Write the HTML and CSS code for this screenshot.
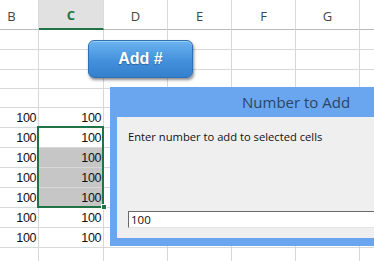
FILE: index.html
```html
<!DOCTYPE html>
<html lang="en">

<head>
    <meta charset="UTF-8">
    <title>Add Number</title>
    <link rel="stylesheet" href="styles.css">
</head>

<body>
    <div class="sheet">
        <div class="head">B</div>
        <div class="head active">C</div>
        <div class="head">D</div>
        <div class="head">E</div>
        <div class="head">F</div>
        <div class="head">G</div>
        <div class="head">H</div>

        <div class="cell"></div><div class="cell"></div><div class="cell"></div><div class="cell"></div><div class="cell"></div><div class="cell"></div><div class="cell"></div>
        <div class="cell"></div><div class="cell"></div><div class="cell"></div><div class="cell"></div><div class="cell"></div><div class="cell"></div><div class="cell"></div>
        <div class="cell"></div><div class="cell"></div><div class="cell"></div><div class="cell"></div><div class="cell"></div><div class="cell"></div><div class="cell"></div>
        <div class="cell"></div><div class="cell"></div><div class="cell"></div><div class="cell"></div><div class="cell"></div><div class="cell"></div><div class="cell"></div>

        <div class="cell">100</div><div class="cell">100</div><div class="cell"></div><div class="cell"></div><div class="cell"></div><div class="cell"></div><div class="cell"></div>
        <div class="cell">100</div><div class="cell">100</div><div class="cell"></div><div class="cell"></div><div class="cell"></div><div class="cell"></div><div class="cell"></div>
        <div class="cell">100</div><div class="cell sel">100</div><div class="cell"></div><div class="cell"></div><div class="cell"></div><div class="cell"></div><div class="cell"></div>
        <div class="cell">100</div><div class="cell sel">100</div><div class="cell"></div><div class="cell"></div><div class="cell"></div><div class="cell"></div><div class="cell"></div>
        <div class="cell">100</div><div class="cell sel">100</div><div class="cell"></div><div class="cell"></div><div class="cell"></div><div class="cell"></div><div class="cell"></div>
        <div class="cell">100</div><div class="cell">100</div><div class="cell"></div><div class="cell"></div><div class="cell"></div><div class="cell"></div><div class="cell"></div>
        <div class="cell">100</div><div class="cell">100</div><div class="cell"></div><div class="cell"></div><div class="cell"></div><div class="cell"></div><div class="cell"></div>
        <div class="cell"></div><div class="cell"></div><div class="cell"></div><div class="cell"></div><div class="cell"></div><div class="cell"></div><div class="cell"></div>
    </div>

    <!-- selected range C6:C9 -->
    <div class="selection"></div>
    <div class="fill-handle"></div>

    <button class="add-button">Add #</button>

    <div class="dialog">
        <div class="dialog-title">Number to Add</div>
        <div class="dialog-body">
            <label for="amount">Enter number to add to selected cells</label>
            <input type="text" id="amount" value="100">
        </div>
    </div>
</body>

</html>
```

FILE: styles.css
```css
* {
    box-sizing: border-box;
    margin: 0;
    padding: 0;
}

body {
    width: 374px;
    height: 261px;
    overflow: hidden;
    position: relative;
    background-color: #fff;
    font-family: "Liberation Sans", Arial, sans-serif;
}

.sheet {
    display: grid;
    grid-template-columns: 54px 65px 64px 64px 64px 64px 64px;
    grid-template-rows: 30px 20px 20px 19px 19px repeat(8, 20px);
    margin-left: -15px;
}

.head {
    display: flex;
    align-items: center;
    justify-content: center;
    padding-top: 2px;
    font-family: "Open Sans", sans-serif;
    font-size: 13px;
    color: #444;
    border-right: 1px solid #dadada;
    border-bottom: 1px solid #bcbcbc;
}

.head.active {
    background-color: #e1e1e1;
    color: #217346;
    font-weight: bold;
    border-bottom: 2px solid #217346;
}

.cell {
    display: flex;
    align-items: center;
    justify-content: flex-end;
    padding-right: 2px;
    font-size: 12.5px;
    letter-spacing: -0.4px;
    color: #111;
    border-right: 1px solid #d8d8d8;
    border-bottom: 1px solid #d8d8d8;
}

.cell.sel {
    background-color: #c6c6c6;
}

.selection {
    position: absolute;
    left: 37px;
    top: 126px;
    width: 67px;
    height: 82px;
    border: 2px solid #217346;
}

.fill-handle {
    position: absolute;
    left: 101px;
    top: 204px;
    width: 6px;
    height: 6px;
    background-color: #217346;
    border: 1px solid #fff;
}

.add-button {
    position: absolute;
    left: 88px;
    top: 40px;
    width: 105px;
    height: 38px;
    border: 1px solid #2f6fb4;
    border-radius: 6px;
    background: linear-gradient(#6ab3f0, #4490dc 55%, #3580cc);
    box-shadow: 1px 2px 3px rgba(0, 0, 0, 0.45), inset 0 1px 0 rgba(255, 255, 255, 0.35);
    color: #fff;
    font-family: "Liberation Sans", Arial, sans-serif;
    font-weight: bold;
    font-size: 16px;
    text-shadow: 0 1px 1px rgba(0, 0, 0, 0.3);
}

.dialog {
    position: absolute;
    left: 110px;
    top: 87px;
    width: 290px;
    height: 159px;
    background-color: #6aa6f0;
    padding: 0 0 8px 7px;
    display: flex;
    flex-direction: column;
}

.dialog-title {
    height: 30px;
    padding-left: 125px;
    display: flex;
    align-items: center;
    font-family: "Open Sans", sans-serif;
    font-size: 15px;
    color: #2b4566;
}

.dialog-body {
    flex-grow: 1;
    background-color: #efefef;
    padding: 12px 0 10px 11px;
    display: flex;
    flex-direction: column;
    justify-content: space-between;
}

.dialog-body label {
    font-family: "Open Sans", sans-serif;
    font-size: 11.2px;
    color: #111;
}

.dialog-body input {
    height: 17px;
    width: 100%;
    border: 1px solid #e3e3e3;
    border-top-color: #6a6a6a;
    border-left-color: #6a6a6a;
    background-color: #fff;
    font-family: "Open Sans", sans-serif;
    font-size: 11.5px;
    padding-left: 2px;
    color: #111;
}
```
